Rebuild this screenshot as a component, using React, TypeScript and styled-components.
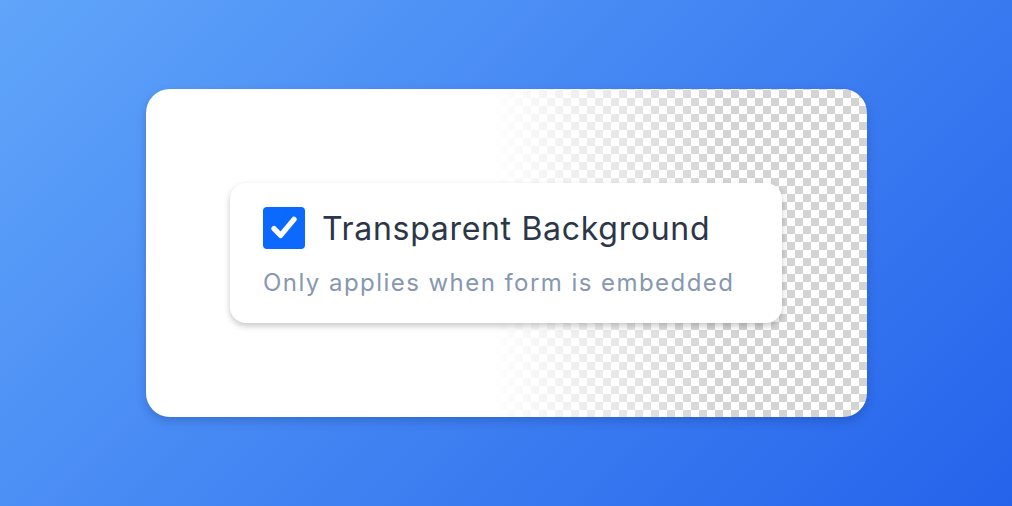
import React from "react";
import styled, { createGlobalStyle } from "styled-components";

const Global = createGlobalStyle`
  html, body { margin: 0; padding: 0; }
  body { font-family: Inter, "Noto Sans", sans-serif; }
`;

const Page = styled.div`
  width: 1012px;
  height: 506px;
  display: flex;
  align-items: center;
  justify-content: center;
  background: linear-gradient(135deg, #60a5fa 0%, #2563eb 100%);
`;

const Stage = styled.div`
  width: 721px;
  height: 328px;
  border-radius: 24px;
  display: flex;
  align-items: center;
  justify-content: center;
  box-shadow: 0 4px 10px rgba(15, 40, 110, 0.25);
  background:
    linear-gradient(to right, #ffffff 48%, rgba(255, 255, 255, 0) 80%),
    repeating-conic-gradient(#d4d4d4 0 25%, #ffffff 0 50%) 1px 1px / 16px 16px;
`;

const Panel = styled.div`
  width: 552px;
  height: 140px;
  box-sizing: border-box;
  padding: 24px 33px 0;
  border-radius: 16px;
  background: #ffffff;
  box-shadow: 0 3px 6px rgba(0, 0, 0, 0.22);
  display: flex;
  flex-direction: column;
`;

const Row = styled.div`
  display: flex;
  align-items: center;
  gap: 17px;
  height: 42px;
`;

const Box = styled.div`
  width: 42px;
  height: 42px;
  border-radius: 4px;
  background: #0b69ff;
  display: flex;
  align-items: center;
  justify-content: center;
  flex: none;
`;

const Title = styled.span`
  font-size: 32px;
  color: #2b3648;
  font-weight: 400;
  line-height: 1;
  letter-spacing: 0.7px;
  margin-top: 2px;
`;

const Hint = styled.div`
  margin-top: 19px;
  font-size: 24px;
  line-height: 29px;
  letter-spacing: 1.45px;
  color: #8797b0;
`;

export default function App() {
  return (
    <>
      <Global />
      <Page>
        <Stage>
          <Panel>
            <Row>
              <Box>
                <svg width="32" height="32" viewBox="0 0 24 24" fill="none">
                  <path d="M4.5 12.5l5 5L19.5 5.5" stroke="#fff" strokeWidth="4" strokeLinecap="round" strokeLinejoin="round" />
                </svg>
              </Box>
              <Title>Transparent Background</Title>
            </Row>
            <Hint>Only applies when form is embedded</Hint>
          </Panel>
        </Stage>
      </Page>
    </>
  );
}
